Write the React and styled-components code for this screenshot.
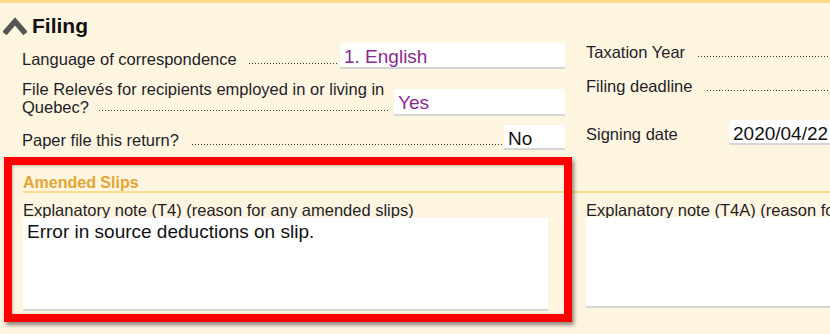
import React from 'react'
import styled, { createGlobalStyle } from 'styled-components'

const GlobalStyle = createGlobalStyle`
  html, body {
    margin: 0;
    padding: 0;
    background: #fef5e1;
    overflow: hidden;
  }
  body {
    font-family: "Liberation Sans", Arial, sans-serif;
    color: #1e1e28;
  }
`

const Page = styled.div`
  position: relative;
  width: 830px;
  height: 334px;
  overflow: hidden;
  border-top: 3px solid #fbd98a;
  box-sizing: border-box;
`

const Header = styled.div`
  display: flex;
  align-items: center;
  gap: 5px;
  padding: 11px 0 0 3px;
  height: 24px;
`

const Title = styled.h2`
  margin: 0;
  font-size: 21px;
  line-height: 24px;
  font-weight: bold;
  color: #111;
`

const Columns = styled.div`
  display: grid;
  grid-template-columns: 543px 360px;
  align-items: start;
  column-gap: 21px;
  padding-left: 22px;
`

const Stack = styled.div`
  display: flex;
  flex-direction: column;
`

const Row = styled.div`
  display: flex;
  align-items: ${p => p.$align || 'flex-end'};
  margin-top: ${p => p.$top || 0}px;
`

const LabelCell = styled.div`
  display: flex;
  flex-direction: column;
  font-size: 16.5px;
  line-height: ${p => p.$lh || 19}px;
  min-width: 0;
  width: ${p => (p.$width ? `${p.$width}px` : 'auto')};
  flex: ${p => (p.$width ? 'none' : 1)};
`

const Line = styled.div`
  display: flex;
  align-items: flex-end;
  white-space: nowrap;
`

const Dots = styled.span`
  flex: 1;
  height: 1px;
  margin: 0 ${p => p.$end ?? 3}px 5px ${p => p.$start ?? 12}px;
  background-image: linear-gradient(to right, #3a3a3a 1px, transparent 1px);
  background-size: 3px 1px;
  background-repeat: repeat-x;
`

const Field = styled.div`
  flex: none;
  box-sizing: border-box;
  width: ${p => p.$width}px;
  height: ${p => p.$height || 26}px;
  padding: 4px 4px 0;
  background: #fff;
  border-bottom: 2px solid #d6d6d6;
  font-size: 19px;
  line-height: 20px;
  white-space: nowrap;
  overflow: hidden;
  color: ${p => (p.$purple ? '#8a2b8e' : '#111')};
`

const Section = styled.div`
  margin: 24px 0 0 23px;
`

const SectionTitle = styled.div`
  font-size: 16px;
  line-height: 17px;
  font-weight: bold;
  color: #e2a631;
  border-bottom: 2px solid #f9dc8e;
`

const Notes = styled.div`
  display: grid;
  grid-template-columns: 525px 300px;
  column-gap: 38px;
  margin-top: 9px;
`

const NoteLabel = styled.div`
  font-size: 16.5px;
  line-height: 16px;
  white-space: nowrap;
  overflow: hidden;
`

const NoteArea = styled.div`
  box-sizing: border-box;
  height: ${p => p.$height || 93}px;
  margin-top: ${p => p.$top || 0}px;
  padding: 3px 4px 0;
  background: #fff;
  border-bottom: 2px solid #d6d6d6;
  font-size: 19px;
  line-height: 22px;
  color: #111;
`

const Highlight = styled.div`
  position: absolute;
  left: 4px;
  top: 154px;
  width: 568px;
  height: 165px;
  box-sizing: border-box;
  border: 8px solid #ff0000;
  box-shadow: 2px 3px 4px rgba(0, 0, 0, 0.45), inset 1px 1px 3px rgba(0, 0, 0, 0.25);
  pointer-events: none;
`

const Chevron = () => (
  <svg width="24" height="18" viewBox="0 0 24 18">
    <polyline points="1.5,16.5 12,4.5 22.5,16.5" fill="none" stroke="#555" strokeWidth="5.5" strokeLinejoin="miter" />
  </svg>
)

const App = () => {
  return (
    <Page>
      <GlobalStyle />
      <Header>
        <Chevron />
        <Title>Filing</Title>
      </Header>

      <Columns>
        <Stack>
          <Row $top={5}>
            <LabelCell>
              <Line>
                <span>Language of correspondence</span>
                <Dots />
              </Line>
            </LabelCell>
            <Field $width={225} $purple>1. English</Field>
          </Row>
          <Row $top={11}>
            <LabelCell $lh={18}>
              <Line>File Relevés for recipients employed in or living in</Line>
              <Line>
                <span>Quebec?</span>
                <Dots $start={10} $end={5} />
              </Line>
            </LabelCell>
            <Field $width={171} $height={27} $purple>Yes</Field>
          </Row>
          <Row $top={9}>
            <LabelCell>
              <Line>
                <span>Paper file this return?</span>
                <Dots $start={13} $end={2} />
              </Line>
            </LabelCell>
            <Field $width={61} $height={25}>No</Field>
          </Row>
        </Stack>

        <Stack>
          <Row $top={5} $align="flex-start">
            <LabelCell>
              <Line>
                <span>Taxation Year</span>
                <Dots $start={13} />
              </Line>
            </LabelCell>
            <Field $width={110} />
          </Row>
          <Row $top={8} $align="flex-start">
            <LabelCell>
              <Line>
                <span>Filing deadline</span>
                <Dots $start={15} />
              </Line>
            </LabelCell>
            <Field $width={110} />
          </Row>
          <Row $top={17} $align="baseline">
            <LabelCell $width={143}>
              <Line>Signing date</Line>
            </LabelCell>
            <Field $width={130} $height={25}>2020/04/22</Field>
          </Row>
        </Stack>
      </Columns>

      <Section>
        <SectionTitle>Amended Slips</SectionTitle>
        <Notes>
          <div>
            <NoteLabel>Explanatory note (T4) (reason for any amended slips)</NoteLabel>
            <NoteArea>Error in source deductions on slip.</NoteArea>
          </div>
          <div>
            <NoteLabel>Explanatory note (T4A) (reason for any amended slips)</NoteLabel>
            <NoteArea $height={91} $top={-1} />
          </div>
        </Notes>
      </Section>

      <Highlight />
    </Page>
  )
}

export default App
